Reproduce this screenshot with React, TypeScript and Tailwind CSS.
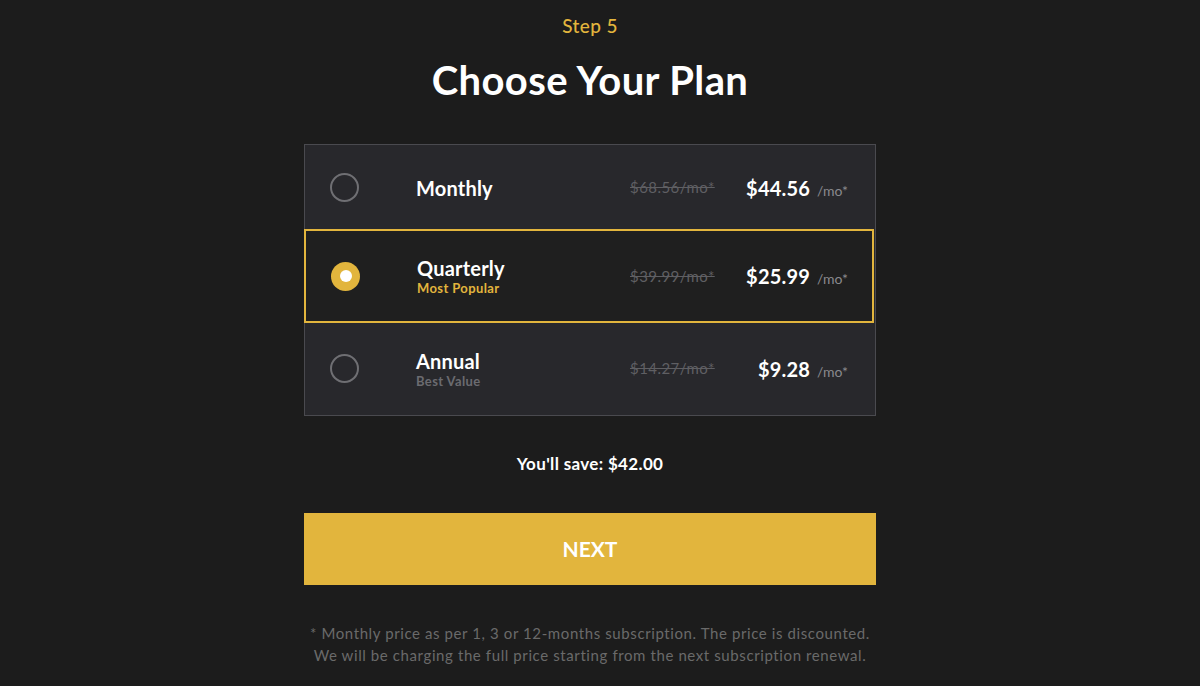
import { useState } from "react";

interface Plan {
  id: string;
  name: string;
  tag?: string;
  oldPrice: string;
  price: string;
  height: string;
}

const plans: Plan[] = [
  { id: "monthly", name: "Monthly", oldPrice: "$68.56/mo*", price: "$44.56", height: "h-[85px]" },
  { id: "quarterly", name: "Quarterly", tag: "Most Popular", oldPrice: "$39.99/mo*", price: "$25.99", height: "h-[94px]" },
  { id: "annual", name: "Annual", tag: "Best Value", oldPrice: "$14.27/mo*", price: "$9.28", height: "h-[93px]" },
];

export default function App() {
  const [selected, setSelected] = useState("quarterly");

  return (
    <div className="min-h-screen bg-[#1c1c1c] flex flex-col items-center pr-[20px] font-['Lato',sans-serif] text-white">
      {/* Header */}
      <div className="mt-[14px] text-[19px] leading-6 text-[#e2b53d] font-medium tracking-[0.02em]">Step 5</div>
      <h1 className="mt-[20px] text-[40px] leading-[44px] font-bold tracking-[0.01em]">Choose Your Plan</h1>

      {/* Plans */}
      <div className="mt-[42px] w-[572px] border border-[#4a4a4f] bg-[#28282c]">
        {plans.map((p) => {
          const active = p.id === selected;
          return (
            <button
              key={p.id}
              onClick={() => setSelected(p.id)}
              className={
                "w-full flex items-center text-left " +
                p.height +
                (active
                  ? " -mx-px w-[calc(100%+2px)] -my-px border-2 border-[#e2b53d] bg-[#1f1f1f] pl-[25px] pr-[24px]"
                  : " pl-[25px] pr-[27px]")
              }
            >
              {active ? (
                <span className="w-[29px] h-[29px] rounded-full bg-[#e2b53d] flex items-center justify-center shrink-0">
                  <span className="w-[12px] h-[12px] rounded-full bg-white" />
                </span>
              ) : (
                <span className="w-[29px] h-[29px] rounded-full border-2 border-[#6f6f73] shrink-0" />
              )}
              <div className="ml-[57px] flex flex-col">
                <span className="text-[20px] leading-6 font-bold tracking-[0.01em]">{p.name}</span>
                {p.tag && (
                  <span
                    className={
                      "text-[13px] leading-4 font-bold tracking-[0.03em] " +
                      (active ? "text-[#e2b53d]" : "text-[#6b6b70]")
                    }
                  >
                    {p.tag}
                  </span>
                )}
              </div>
              <span className="ml-auto text-[15px] text-[#5f5f63] line-through tracking-[0.03em] w-[114px]">
                {p.oldPrice}
              </span>
              <span className="w-[104px] flex items-baseline justify-end">
                <span className="text-[20px] font-bold tracking-[0.01em]">{p.price}</span>
                <span className="ml-[7px] text-[14px] text-[#8a8a8e]">/mo*</span>
              </span>
            </button>
          );
        })}
      </div>

      <div className="mt-[36px] text-[17px] leading-6 font-bold tracking-[0.02em]">You'll save: $42.00</div>

      <button className="mt-[37px] w-[572px] h-[72px] bg-[#e2b53d] text-white text-[21px] font-bold">
        NEXT
      </button>

      <div className="mt-[37px] text-center text-[15px] leading-[22px] text-[#6a6a6a] tracking-[0.04em]">
        <p>* Monthly price as per 1, 3 or 12-months subscription. The price is discounted.</p>
        <p>We will be charging the full price starting from the next subscription renewal.</p>
      </div>
    </div>
  );
}
